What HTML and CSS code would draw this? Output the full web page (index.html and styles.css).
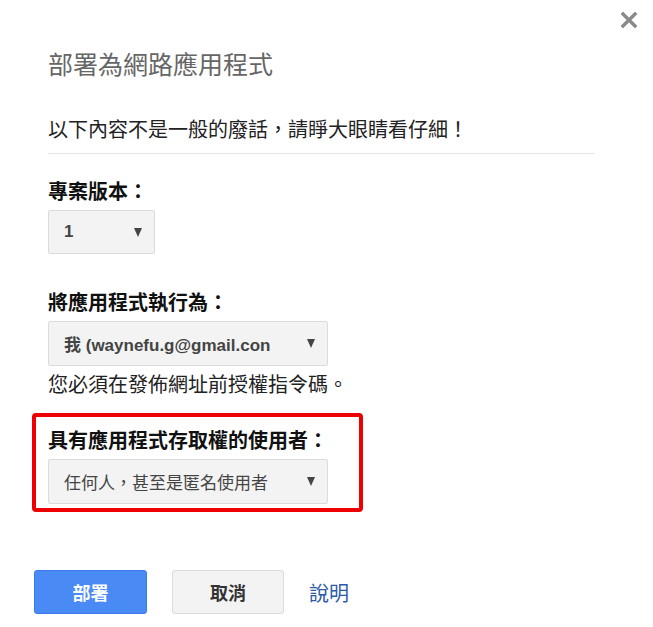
FILE: index.html
```html
<!DOCTYPE html>
<html lang="zh-Hant">
<head>
  <meta charset="UTF-8">
  <title>部署為網路應用程式</title>
  <link rel="stylesheet" href="styles.css">
</head>
<body>
  <div class="dialog">
    <button class="close" title="關閉">
      <svg width="16" height="16" viewBox="0 0 16 16"><path d="M2 2L14 14M14 2L2 14" stroke="#8a8a8a" stroke-width="3.4" stroke-linecap="square"/></svg>
    </button>
    <h1 class="title">部署為網路應用程式</h1>
    <p class="intro">以下內容不是一般的廢話，請睜大眼睛看仔細！</p>

    <div class="field">
      <div class="label">專案版本：</div>
      <div class="select select-short"><span class="val val-bold">1</span><span class="arrow"></span></div>
    </div>

    <div class="field field-gap">
      <div class="label">將應用程式執行為：</div>
      <div class="select"><span class="val val-bold">我 (waynefu.g@gmail.con</span><span class="arrow"></span></div>
      <div class="hint">您必須在發佈網址前授權指令碼。</div>
    </div>

    <div class="field highlight">
      <div class="label">具有應用程式存取權的使用者：</div>
      <div class="select"><span class="val">任何人，甚至是匿名使用者</span><span class="arrow"></span></div>
    </div>

    <div class="actions">
      <button class="btn btn-primary">部署</button>
      <button class="btn">取消</button>
      <a class="help" href="#">說明</a>
    </div>
  </div>
</body>
</html>
```

FILE: styles.css
```css
html, body { margin: 0; padding: 0; background: #fff; }
body { font-family: "Liberation Sans", Arial, "Noto Sans CJK TC", sans-serif; color: #222; }

.dialog { position: relative; padding: 47px 58px 0 48px; }

.close { position: absolute; top: 12px; right: 16px; padding: 0; border: 0; background: none; cursor: pointer; line-height: 0; }

.title { margin: 0; font-family: "Noto Sans CJK TC", sans-serif; font-size: 25px; line-height: 32px; font-weight: 400; color: #666; }

.intro { margin: 36px 0 0 0; padding-bottom: 10px; border-bottom: 1px solid #e5e5e5; font-family: "Noto Sans CJK TC", sans-serif; font-size: 20px; line-height: 28px; color: #222; }

.field { margin-top: 23px; }
.field-gap { margin-top: 34px; }

.label { font-family: "Noto Sans CJK TC", sans-serif; font-size: 20px; line-height: 28px; font-weight: 700; color: #111; margin-bottom: 5px; white-space: nowrap; }

.select { display: flex; align-items: center; justify-content: space-between; box-sizing: border-box; width: 280px; height: 45px; padding: 0 12px 0 15px; background: #f3f3f3; border: 1px solid #dcdcdc; border-radius: 2px; color: #444; }
.select-short { width: 107px; height: 44px; }

.val { font-family: "Noto Sans CJK TC", sans-serif; font-size: 17px; color: #444; }
.val-bold { font-family: "Liberation Sans", Arial, "Noto Sans CJK TC", sans-serif; font-size: 17px; font-weight: 700; }

.arrow { width: 0; height: 0; border-left: 4px solid transparent; border-right: 4px solid transparent; border-top: 9px solid #444; }

.hint { margin-top: 4px; font-family: "Noto Sans CJK TC", sans-serif; font-size: 20px; line-height: 28px; color: #222; }

.highlight { box-sizing: border-box; width: 331px; margin: 15px 0 0 -16px; padding: 9px 28px 4px 12px; border: 4px solid #ee0000; border-radius: 4px; }

.actions { display: flex; align-items: center; margin: 58px 0 0 -14px; }

.btn { box-sizing: border-box; width: 112px; height: 44px; margin-right: 25px; font-family: "Noto Sans CJK TC", sans-serif; font-size: 18px; font-weight: 700; color: #333; background: #f3f3f3; border: 1px solid #dcdcdc; border-radius: 3px; cursor: pointer; }
.btn-primary { width: 113px; color: #fff; background: #4a8af5; border-color: #3b7be8; }

.help { font-family: "Noto Sans CJK TC", sans-serif; font-size: 20px; color: #2d5aa8; text-decoration: none; }
```
